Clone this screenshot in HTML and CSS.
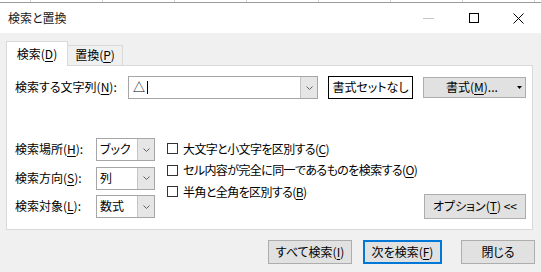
FILE: index.html
```html
<!DOCTYPE html>
<html lang="ja">
<head>
  <meta charset="UTF-8">
  <title>検索と置換</title>
  <link rel="stylesheet" href="styles.css">
</head>
<body>

  <div class="sheet"></div>

  <div class="titlebar">
    <span class="title">検索と置換</span>
    <div class="controls">
      <span class="ctl"><svg width="11" height="1"><line x1="0" y1="0.5" x2="11" y2="0.5" stroke="#c4c4c4"/></svg></span>
      <span class="ctl"><svg width="10" height="10"><rect x="0.5" y="0.5" width="9" height="9" fill="none" stroke="#000"/></svg></span>
      <span class="ctl"><svg width="11" height="11"><path d="M0.5 0.5 L10.5 10.5 M10.5 0.5 L0.5 10.5" stroke="#000" stroke-width="1"/></svg></span>
    </div>
  </div>

  <div class="dialog">
    <div class="tabs">
      <div class="tab tab-active">検索(<u>D</u>)</div>
      <div class="tab">置換(<u>P</u>)</div>
    </div>

    <div class="panel">
      <div class="find-row">
        <span class="find-label">検索する文字列(<u>N</u>):</span>
        <div class="combo combo-find">
          <span class="combo-text">△<span class="caret"></span></span>
          <span class="combo-btn"><svg width="7" height="4"><polyline points="0.5,0.5 3.5,3.5 6.5,0.5" fill="none" stroke="#606060"/></svg></span>
        </div>
        <button class="btn btn-preview">書式セットなし</button>
        <button class="btn btn-format"><span>書式(<u>M</u>)...</span><svg class="split-arrow" width="5" height="3"><polygon points="0,0 5,0 2.5,3" fill="#000"/></svg></button>
      </div>

      <div class="options">
        <div class="opt-grid">
          <span class="opt-label">検索場所(<u>H</u>):</span>
          <div class="combo">
            <span class="combo-text">ブック</span>
            <span class="combo-btn"><svg width="7" height="4"><polyline points="0.5,0.5 3.5,3.5 6.5,0.5" fill="none" stroke="#606060"/></svg></span>
          </div>
          <span class="opt-label">検索方向(<u>S</u>):</span>
          <div class="combo">
            <span class="combo-text">列</span>
            <span class="combo-btn"><svg width="7" height="4"><polyline points="0.5,0.5 3.5,3.5 6.5,0.5" fill="none" stroke="#606060"/></svg></span>
          </div>
          <span class="opt-label">検索対象(<u>L</u>):</span>
          <div class="combo">
            <span class="combo-text">数式</span>
            <span class="combo-btn"><svg width="7" height="4"><polyline points="0.5,0.5 3.5,3.5 6.5,0.5" fill="none" stroke="#606060"/></svg></span>
          </div>
        </div>

        <div class="checks">
          <label class="check"><span class="box"></span>大文字と小文字を区別する(<u>C</u>)</label>
          <label class="check"><span class="box"></span>セル内容が完全に同一であるものを検索する(<u>O</u>)</label>
          <label class="check"><span class="box"></span>半角と全角を区別する(<u>B</u>)</label>
        </div>

        <button class="btn btn-options">オプション(<u>T</u>) &lt;&lt;</button>
      </div>
    </div>

    <div class="actions">
      <button class="btn btn-all">すべて検索(<u>I</u>)</button>
      <button class="btn btn-next">次を検索(<u>F</u>)</button>
      <button class="btn btn-close">閉じる</button>
    </div>
  </div>

</body>
</html>
```

FILE: styles.css
```css
* {
  margin: 0;
  padding: 0;
  box-sizing: border-box;
}

body {
  font-family: "Noto Sans CJK JP", "Noto Sans", sans-serif;
  font-size: 12px;
  font-feature-settings: "palt";
  line-height: 1.2;
  color: #000;
  background-color: #f0f0f0;
  width: 541px;
  height: 272px;
  overflow: hidden;
}

u {
  text-underline-offset: 2px;
}

.sheet {
  height: 3px;
  background-color: #fff;
  background-image: linear-gradient(to right, #d4d4d4 1px, transparent 1px);
  background-size: 72px 100%;
  background-position: 30px 0;
  border-bottom: 1px solid #9a9a9a;
}

.titlebar {
  height: 30px;
  background-color: #fff;
  display: flex;
  align-items: center;
  justify-content: space-between;
}

.title {
  padding-left: 8px;
  color: #1a1a1a;
}

.controls {
  display: flex;
  height: 100%;
}

.ctl {
  width: 45px;
  display: flex;
  align-items: center;
  justify-content: center;
}

.ctl svg {
  display: block;
}

.dialog {
  padding: 8px 6px 0 6px;
}

.tabs {
  display: flex;
  align-items: flex-end;
  height: 24px;
}

.tab {
  height: 20px;
  width: 55px;
  display: flex;
  align-items: center;
  justify-content: center;
  border: 1px solid #d9d9d9;
  border-bottom: none;
  border-left: none;
  background-color: #f0f0f0;
}

.tab-active {
  width: 62px;
  height: 25px;
  margin-bottom: -1px;
  border-left: 1px solid #d9d9d9;
  background-color: #fff;
  position: relative;
  z-index: 1;
}

.panel {
  width: 527px;
  height: 165px;
  background-color: #fff;
  border: 1px solid #d9d9d9;
  padding: 10px 6px 0 8px;
}

.find-row {
  display: flex;
  align-items: center;
  height: 23px;
}

.find-label {
  width: 113px;
  white-space: nowrap;
}

.combo {
  display: flex;
  height: 23px;
  border: 1px solid #a6a6a6;
  background-color: #fff;
}

.combo-find {
  width: 190px;
}

.combo-text {
  flex: 1;
  display: flex;
  align-items: center;
  padding-left: 4px;
}

.caret {
  display: inline-block;
  width: 1px;
  height: 13px;
  margin-left: 2px;
  background-color: #000;
}

.combo-btn {
  width: 17px;
  display: flex;
  align-items: center;
  justify-content: center;
  background-color: #e6e6e6;
  border-left: 1px solid #c4c4c4;
}

.combo-btn svg {
  display: block;
}

.btn {
  font: inherit;
  font-feature-settings: "palt";
  color: #000;
  background-color: #e1e1e1;
  border: 1px solid #adadad;
  height: 24px;
  display: flex;
  align-items: center;
  justify-content: center;
  white-space: nowrap;
  flex-shrink: 0;
}

.btn-preview {
  width: 85px;
  height: 23px;
  margin-left: 10px;
  background-color: #fff;
  border-color: #000;
}

.btn-format {
  width: 103px;
  height: 21px;
  margin-left: 10px;
  justify-content: flex-start;
  padding-left: 22px;
}

.split-arrow {
  display: block;
  margin-left: auto;
  margin-right: 3px;
}

.options {
  display: flex;
  align-items: flex-start;
  margin-top: 39px;
}

.opt-grid {
  display: grid;
  grid-template-columns: 81px 59px;
  grid-auto-rows: 23px;
  row-gap: 5.5px;
  align-items: center;
  flex-shrink: 0;
}

.opt-label {
  white-space: nowrap;
}

.opt-grid .combo-text {
  padding-left: 3px;
}

.checks {
  margin-left: 12px;
  display: flex;
  flex-direction: column;
  flex: 1;
  min-width: 0;
  letter-spacing: -0.6px;
}

.check {
  height: 21.5px;
  display: flex;
  align-items: center;
  white-space: nowrap;
}

.box {
  width: 11px;
  height: 11px;
  border: 1px solid #333;
  background-color: #fff;
  margin-right: 5px;
  flex-shrink: 0;
}

.btn-options {
  width: 102px;
  height: 25px;
  align-self: flex-end;
  margin-bottom: -1px;
}

.actions {
  display: flex;
  justify-content: flex-end;
  margin-top: 10px;
}

.btn-all {
  width: 84px;
}

.btn-next {
  width: 79px;
  margin-left: 11px;
  border: 2px solid #0078d7;
}

.btn-close {
  width: 74px;
  margin-left: 19px;
}
```
